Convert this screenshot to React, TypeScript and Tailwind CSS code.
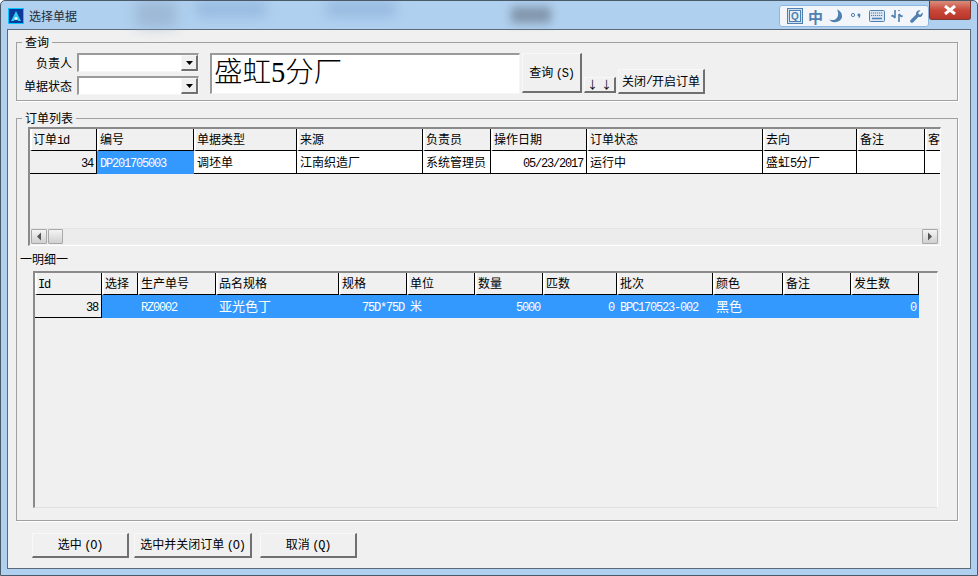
import React from "react";

const bevel = "bg-[#f0f0f0] border border-[#f8f8f8] border-r-2 border-b-2 border-r-[#707070] border-b-[#707070]";
const sunken = "bg-white border-2 border-[#9a9a9a] border-r-[#f6f6f6] border-b-[#f6f6f6] border-r border-b";

// latin text in the old bitmap font is half width
const L = ({ children }: { children: React.ReactNode }) => (
  <span className="font-['Liberation_Mono'] text-[12px] tracking-[-1.2px]">{children}</span>
);

type Cell = { w: string; head: React.ReactNode; val?: React.ReactNode; cls?: string };

const orderCols: Cell[] = [
  { w: "w-[67px]", head: <>订单<L>id</L></>, val: <L>34</L>, cls: "text-right bg-[#f0f0f0]" },
  { w: "w-[97px]", head: "编号", val: <L>DP201705003</L>, cls: "bg-[#3399ff] text-white" },
  { w: "w-[103px]", head: "单据类型", val: "调坯单", cls: "bg-white" },
  { w: "w-[126px]", head: "来源", val: "江南织造厂", cls: "bg-white" },
  { w: "w-[68px]", head: "负责员", val: "系统管理员", cls: "bg-white" },
  { w: "w-[96px]", head: "操作日期", val: <L>05/23/2017</L>, cls: "bg-white text-right" },
  { w: "w-[176px]", head: "订单状态", val: "运行中", cls: "bg-white" },
  { w: "w-[94px]", head: "去向", val: <>盛虹<L>5</L>分厂</>, cls: "bg-white" },
  { w: "w-[68px]", head: "备注", val: "", cls: "bg-white" },
  { w: "w-[16px]", head: "客", val: "", cls: "bg-white" },
];

const blue = "bg-[#3399ff] text-white";
const detailCols: Cell[] = [
  { w: "w-[67px]", head: <L>Id</L>, val: <L>38</L>, cls: "text-right bg-[#f0f0f0]" },
  { w: "w-[36px]", head: "选择", val: "", cls: blue },
  { w: "w-[78px]", head: "生产单号", val: <L>RZ0002</L>, cls: blue },
  { w: "w-[123px]", head: "品名规格", val: <span className="text-[13px]">亚光色丁</span>, cls: blue },
  { w: "w-[68px]", head: "规格", val: <L>75D*75D</L>, cls: blue + " text-right" },
  { w: "w-[68px]", head: "单位", val: "米", cls: blue },
  { w: "w-[68px]", head: "数量", val: <L>5000</L>, cls: blue + " text-right" },
  { w: "w-[74px]", head: "匹数", val: <L>0</L>, cls: blue + " text-right" },
  { w: "w-[96px]", head: "批次", val: <L>BPC170523-002</L>, cls: blue },
  { w: "w-[70px]", head: "颜色", val: <span className="text-[13px]">黑色</span>, cls: blue },
  { w: "w-[68px]", head: "备注", val: "", cls: blue },
  { w: "w-[68px]", head: "发生数", val: <L>0</L>, cls: blue + " text-right" },
];

function Table({ cols }: { cols: Cell[] }) {
  return (
    <div className="shrink-0">
      <div className="flex h-[22px]">
        {cols.map((c, i) => (
          <div
            key={i}
            className={`${c.w} shrink-0 overflow-hidden whitespace-nowrap border-r border-b border-black border-l-2 border-l-white pl-[1px] leading-[19px] bg-[#f0f0f0]`}
          >
            {c.head}
          </div>
        ))}
      </div>
      <div className="flex h-[23px]">
        {cols.map((c, i) => (
          <div
            key={i}
            className={`${c.w} ${c.cls} shrink-0 overflow-hidden whitespace-nowrap border-b border-black ${i === 0 ? "border-r" : c.cls?.startsWith(blue) ? "border-b-0" : "border-r"} px-[3px] leading-[22px]`}
          >
            {c.val}
          </div>
        ))}
      </div>
    </div>
  );
}

const Arrow = ({ right }: { right?: boolean }) => (
  <svg width="8" height="9" viewBox="0 0 8 9" className={right ? "" : "rotate-180"}>
    <path d="M2 0.5 L6 4.5 L2 8.5 Z" fill="#555" />
  </svg>
);

function Combo() {
  return (
    <div className={`${sunken} w-[122px] h-[19px] flex justify-end`}>
      <div className={`${bevel} w-[17px] h-full flex items-center justify-center`}>
        <svg width="7" height="4" viewBox="0 0 7 4"><path d="M0 0h7L3.5 4z" fill="#000" /></svg>
      </div>
    </div>
  );
}

const GroupTitle = ({ children }: { children: React.ReactNode }) => (
  <div className="absolute -top-[9px] left-[5px] bg-[#f0f0f0] px-[1px] leading-[16px]">{children}</div>
);

function ImeBar() {
  const c = "#4f80b0";
  return (
    <div className="w-[150px] h-[22px] mt-[4px] rounded-[3px] border border-[#8fb6de] bg-[#f2f6fb] flex items-center pl-[7px] gap-[5px] z-10">
      <svg width="16" height="16" viewBox="0 0 16 16">
        <rect x="0.5" y="0.5" width="15" height="15" fill="#cfe0f0" stroke={c} />
        <rect x="2.5" y="2.5" width="11" height="11" fill="#e8f0f8" stroke={c} />
        <text x="8" y="12" textAnchor="middle" fontSize="10" fontWeight="700" fill={c} fontFamily="Liberation Sans">Q</text>
      </svg>
      <span className="text-[15px] font-bold text-[#4f80b0] leading-none w-[15px]">中</span>
      <svg width="14" height="14" viewBox="0 0 14 14" className="ml-[1px]">
        <path d="M8 0.5 C11 1.5 13.5 4.5 13 8 C12.5 11.5 8 14 4 13 C2.5 12.7 1 11.8 0.5 10.5 C4 11.8 7 11 8.5 8 C9.5 5.5 9.3 3 8 0.5 Z" fill={c} />
      </svg>
      <svg width="10" height="8" viewBox="0 0 10 8" className="ml-[3px]">
        <circle cx="2" cy="3" r="1.6" fill="none" stroke={c} />
        <path d="M8 1.5 a1.4 1.4 0 0 1 1.4 1.4 c0 1.6-.8 3-2 3.6 .4-.8.6-1.4.5-2 a1.5 1.5 0 0 1 .1-3z" fill={c} />
      </svg>
      <svg width="16" height="12" viewBox="0 0 16 12" className="ml-[3px]">
        <rect x="0.5" y="0.5" width="15" height="11" rx="1" fill="#dbe7f3" stroke={c} />
        <path d="M2 3h12M2 5.5h12" stroke={c} strokeDasharray="1.2 .8" />
        <path d="M3 8.5h10" stroke={c} strokeWidth="1.6" />
      </svg>
      <svg width="12" height="14" viewBox="0 0 12 14" className="ml-[1px]">
        <path d="M4 1v8M4 9L1 6M4 9V6" stroke={c} strokeWidth="1.6" fill="none" />
        <path d="M8 13V5M8 5l3 3M8 1v1" stroke={c} strokeWidth="1.6" fill="none" />
        <path d="M0 7h3M9 7h3" stroke={c} />
      </svg>
      <svg width="13" height="13" viewBox="0 0 13 13" className="ml-[2px]">
        <path d="M12.6 2.6 L10 5 L8 3 L10.4 .4 C8.2 -.3 5.6 1.4 6 4.6 L.6 10 C-.2 11 .2 12 .8 12.4 C1.4 13 2.4 13 3 12.4 L8.4 7 C11.4 7.6 13.4 5 12.6 2.6 Z" fill={c} />
      </svg>
    </div>
  );
}

export default function App() {
  return (
    <div className="relative w-[978px] h-[576px] overflow-hidden flex flex-col bg-[#b0d0ef] rounded-t-[5px] border-t border-x border-b border-[#4a5a68] font-['Noto_Sans_CJK_SC',sans-serif] text-[12px] text-black">
      {/* blurred desktop showing through the glass */}
      <div className="absolute top-0 left-[135px] w-[40px] h-[26px] bg-[#8fa9c4] blur-[7px] opacity-60" />
      <div className="absolute top-0 left-[195px] w-[70px] h-[16px] bg-[#8db2da] blur-[6px] opacity-70" />
      <div className="absolute top-0 left-[325px] w-[70px] h-[16px] bg-[#8db2da] blur-[6px] opacity-70" />
      <div className="absolute top-[6px] left-[510px] w-[40px] h-[16px] bg-[#76879a] blur-[5px] opacity-80" />

      <div className="relative h-[28px] flex items-start shrink-0 pr-[6px]">
        <div className="mt-[7px] ml-[7px] w-[16px] h-[16px] bg-[#0a3a9a] border border-[#00c8ff] flex items-center justify-center">
          <svg width="12" height="12" viewBox="0 0 12 12">
            <path d="M6 1 L11 11 H8 L6 7 L4 11 H1 Z" fill="#2fd0f5" />
            <circle cx="6" cy="8.5" r="1.5" fill="#fff" />
          </svg>
        </div>
        <div className="ml-[5px] mt-[6px] text-[#1c2c3c] leading-[18px]">选择单据</div>
        <div className="ml-auto flex items-start">
          <ImeBar />
          <div className="w-[42px] h-[19px] rounded-b-[3px] bg-gradient-to-b from-[#d98c7c] via-[#c9483a] to-[#b8352a] border border-[#7d3a34] border-t-0 flex items-center justify-center">
            <svg width="14" height="10" viewBox="0 0 14 10">
              <path d="M2 1 L12 9 M12 1 L2 9" stroke="#fff" strokeWidth="3" />
            </svg>
          </div>
        </div>
      </div>

      <div className="mx-[6px] mb-[6px] flex-1 border border-[#5b6b7b] bg-[#f0f0f0] flex flex-col">
        {/* query */}
        <div className="relative mt-[12px] ml-[8px] mr-[12px] h-[59px] border border-[#a0a0a0] shadow-[1px_1px_0_#fff] flex items-start pt-[10px] shrink-0">
          <GroupTitle><span className="px-[2px]">查询</span></GroupTitle>
          <div className="grid grid-cols-[55px_122px] gap-x-[5px] gap-y-[4px] items-center">
            <div className="text-right">负责人</div>
            <Combo />
            <div className="text-right">单据状态</div>
            <Combo />
          </div>
          <div className={`${sunken} ml-[11px] w-[310px] h-[41px] flex items-center pl-[2px] pb-[2px] text-[28.5px] leading-none font-light font-['Liberation_Serif','Noto_Sans_CJK_SC',serif]`}>
            盛虹5分厂
          </div>
          <div className={`${bevel} ml-[2px] w-[60px] h-[40px] flex items-center justify-center`}><span>查询 <L>(S)</L></span></div>
          <div className={`${bevel} ml-[2px] mt-[24px] w-[32px] h-[16px] flex items-center justify-center gap-[3px] text-[11px] leading-none`}>
            <span>↓</span><span>↓</span>
          </div>
          <div className={`${bevel} ml-[2px] mt-[16px] w-[87px] h-[25px] flex items-center justify-center whitespace-nowrap`}>关闭<L>/</L>开启订单</div>
        </div>

        {/* orders + details */}
        <div className="relative mt-[17px] ml-[8px] mr-[12px] h-[403px] border border-[#a0a0a0] shadow-[1px_1px_0_#fff] flex flex-col shrink-0">
          <GroupTitle><span className="px-[2px]">订单列表</span></GroupTitle>
          <div className="ml-[11px] mt-[8px] w-[913px] h-[119px] border-t-2 border-l-2 border-[#8a8a8a] border-r border-b border-r-white border-b-white flex flex-col overflow-hidden shrink-0">
            <Table cols={orderCols} />
            <div className="mt-auto mb-[1px] h-[16px] flex items-center bg-[#ececec] border-t border-[#e4e4e4] pl-[1px] pr-[2px]">
              <div className="w-[16px] h-[15px] bg-gradient-to-b from-[#f4f4f4] to-[#d0d0d0] border border-[#a8a8a8] rounded-[1px] flex items-center justify-center"><Arrow /></div>
              <div className="ml-[1px] w-[15px] h-[15px] bg-gradient-to-b from-[#f4f4f4] to-[#d0d0d0] border border-[#a8a8a8] rounded-[1px]" />
              <div className="ml-auto w-[16px] h-[15px] bg-gradient-to-b from-[#f4f4f4] to-[#d0d0d0] border border-[#a8a8a8] rounded-[1px] flex items-center justify-center"><Arrow right /></div>
            </div>
          </div>
          <div className="mt-[4px] ml-[3px] h-[18px] leading-[18px] shrink-0">一明细一</div>
          <div className="ml-[16px] mt-[3px] w-[905px] h-[237px] border-t-2 border-l-2 border-[#8a8a8a] border-r border-b border-r-white border-b-[#e0e0e0] overflow-hidden">
            <Table cols={detailCols} />
          </div>
        </div>

        {/* bottom buttons */}
        <div className="mt-[12px] ml-[24px] flex">
          <div className={`${bevel} w-[97px] h-[25px] flex items-center justify-center`}><span>选中 <L>(O)</L></span></div>
          <div className={`${bevel} ml-[5px] w-[118px] h-[25px] flex items-center justify-center`}><span>选中并关闭订单 <L>(O)</L></span></div>
          <div className={`${bevel} ml-[8px] w-[97px] h-[25px] flex items-center justify-center`}><span>取消 <L>(Q)</L></span></div>
        </div>
      </div>
    </div>
  );
}
